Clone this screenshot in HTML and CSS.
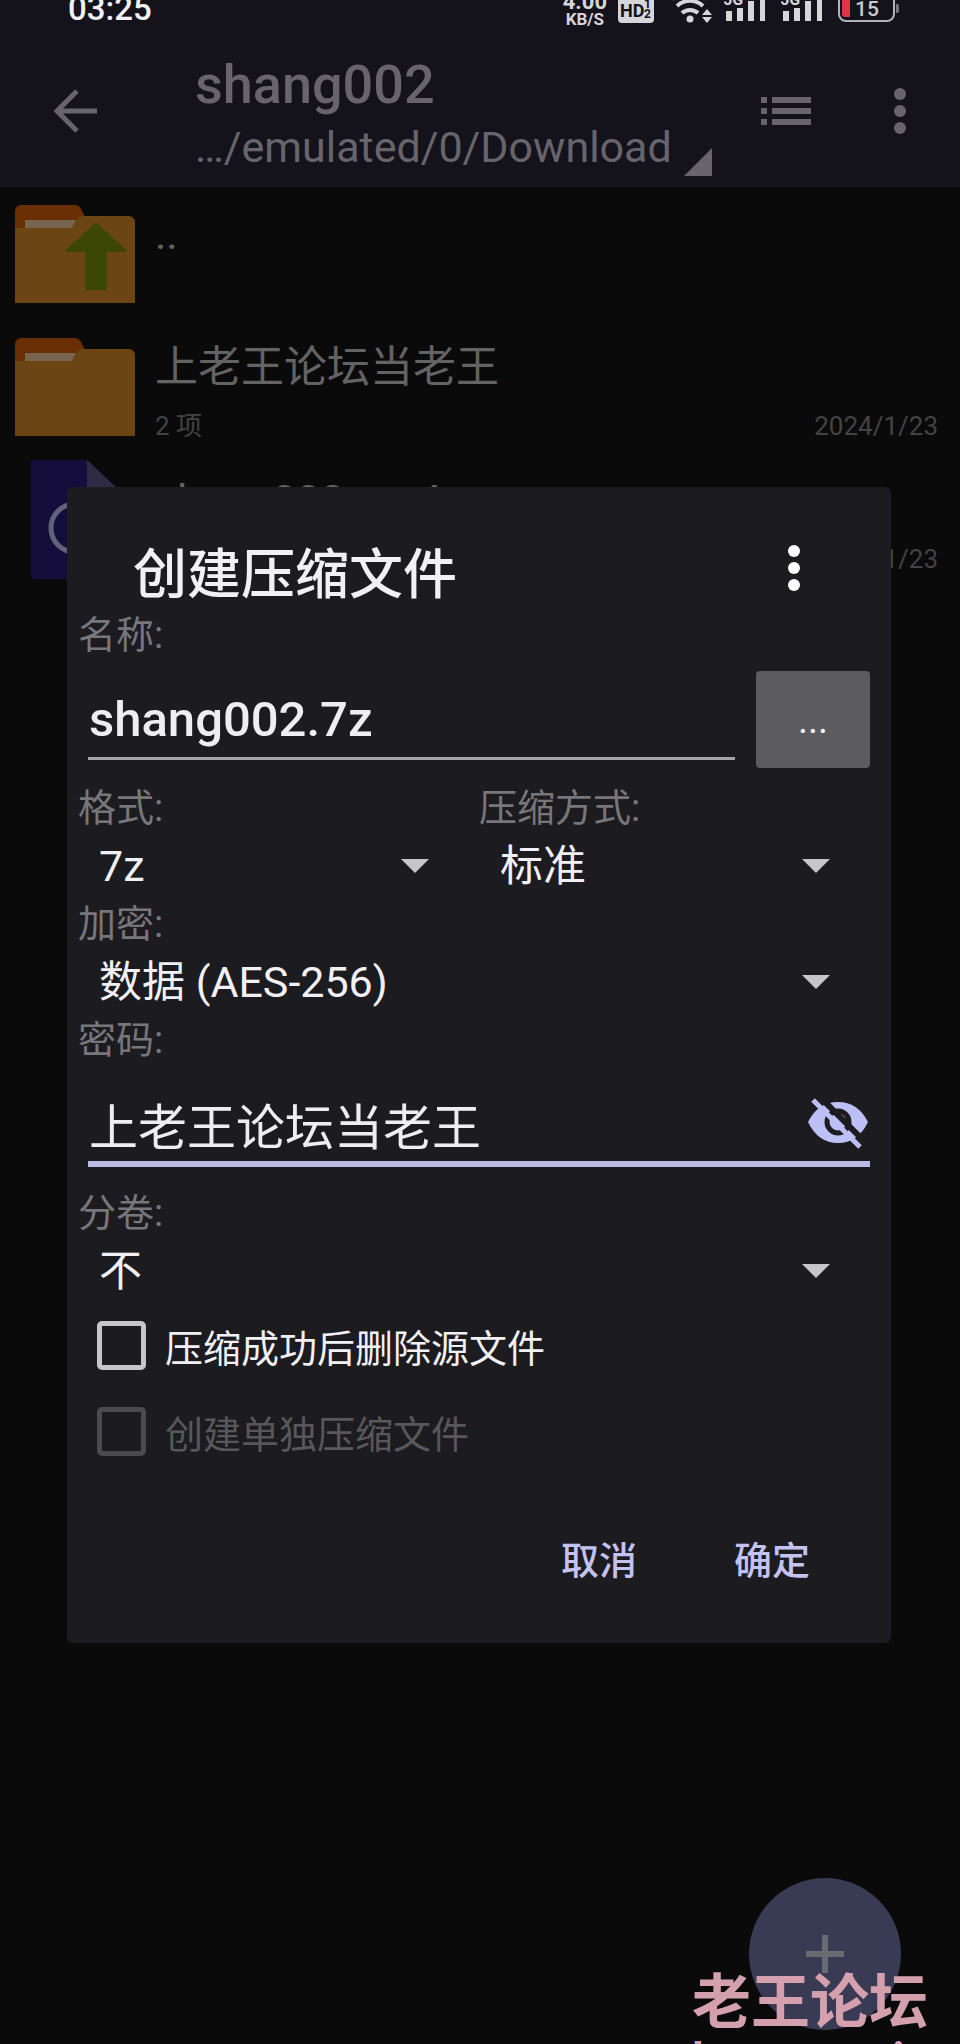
FILE: index.html
```html
<!DOCTYPE html>
<html lang="zh-CN">
<head>
<meta charset="utf-8">
<meta name="viewport" content="width=device-width, initial-scale=1">
<title>创建压缩文件</title>
<link rel="stylesheet" href="styles.css">
</head>
<body>
<div class="screen">
  <header class="app-header">
    <div class="status">
      <span class="clock">03:25</span>
      <div class="status-icons">
        <span class="speed"><span class="speed-value">4.00</span><span>KB/S</span></span>
        <svg class="hd" width="38" height="28" viewBox="0 0 38 28" aria-hidden="true">
          <rect x="1" y="-8" width="36" height="31" rx="4" fill="#d6d5da"/>
          <text x="3" y="17" font-size="18" font-weight="700" fill="#14121b">HD</text>
          <text x="27" y="8" font-size="12" font-weight="700" fill="#14121b">1</text>
          <text x="27" y="18" font-size="12" font-weight="700" fill="#14121b">2</text>
        </svg>
        <svg class="wifi" width="42" height="28" viewBox="0 0 42 28" aria-hidden="true">
          <circle cx="19" cy="19" r="3.5" fill="#d6d5da"/>
          <g fill="none" stroke="#d6d5da" stroke-width="4"><path d="M11 13a12 12 0 0 1 16 0"/><path d="M6 6a19 19 0 0 1 26 0"/><path d="M1-1a27 27 0 0 1 36 0"/></g>
          <path d="M31 15h10l-5-6zM31 17h10l-5 6z" fill="#d6d5da"/>
        </svg>
        <svg class="signal" width="42" height="28" viewBox="0 0 42 28" aria-hidden="true">
          <path d="M2 11h6v10h-6zM13 8h6v13h-6zM24 1h6v20h-6zM36 0h5v21h-5z" fill="#d6d5da"/>
          <text x="-1" y="5" font-size="16" font-weight="700" fill="#d6d5da">5G</text>
        </svg>
        <svg class="signal" width="42" height="28" viewBox="0 0 42 28" aria-hidden="true">
          <path d="M2 11h6v10h-6zM13 8h6v13h-6zM24 1h6v20h-6zM36 0h5v21h-5z" fill="#d6d5da"/>
          <text x="-1" y="5" font-size="16" font-weight="700" fill="#d6d5da">5G</text>
        </svg>
        <svg class="battery" width="62" height="28" viewBox="0 0 62 28" aria-hidden="true">
          <rect x="1" y="-8" width="55" height="29" rx="7" fill="none" stroke="#b3b2b9" stroke-width="2"/>
          <path d="M58 4h1a2 2 0 0 1 2 2v5a2 2 0 0 1-2 2h-1z" fill="#77767c"/>
          <path d="M4-4h8v21h-5a3 3 0 0 1-3-3z" fill="#dc3547"/>
          <text x="17" y="16" font-size="21" font-weight="500" fill="#cccbd1">15</text>
        </svg>
      </div>
    </div>
    <div class="toolbar">
      <button class="icon-btn" type="button" aria-label="返回">
        <svg width="44" height="44" viewBox="0 0 44 44"><path d="M43 22H3M23 2L3 22l20 20" fill="none" stroke="#67656b" stroke-width="5"/></svg>
      </button>
      <div class="heading">
        <h1 class="title">shang002</h1>
        <div class="path"><span>…/emulated/0/Download</span><svg width="28" height="28" viewBox="0 0 28 28" aria-hidden="true"><path d="M28 0v28H0z" fill="#67656b"/></svg></div>
      </div>
      <button class="icon-btn" type="button" aria-label="列表视图">
        <svg width="50" height="28" viewBox="0 0 50 28"><path d="M0 0h6v6H0zM11 0h39v6H11zM0 11h6v6H0zM11 11h39v6H11zM0 22h6v6H0zM11 22h39v6H11z" fill="#67656b"/></svg>
      </button>
      <button class="icon-btn more" type="button" aria-label="更多">
        <svg width="12" height="46" viewBox="0 0 12 46"><g fill="#67656b"><circle cx="6" cy="6" r="6"/><circle cx="6" cy="23" r="6"/><circle cx="6" cy="40" r="6"/></g></svg>
      </button>
    </div>
  </header>

  <ul class="files">
    <li class="file">
      <svg class="file-icon" width="121" height="98" viewBox="0 0 121 98" aria-hidden="true">
        <path d="M0 30V6a6 6 0 0 1 6-6h54q4 0 6 4l7 14v12z" fill="#6a2e05"/>
        <path d="M0 23h57l5-9q2-3 6-3h46a6 6 0 0 1 6 6v81H0z" fill="#6b4513"/>
        <path d="M10 15h51l-4 8H10z" fill="#78654f"/>
        <path d="M81 17l32 30H92v38H70V47H49z" fill="#3c4703"/>
      </svg>
      <div class="file-text"><span class="file-name">..</span></div>
    </li>
    <li class="file">
      <svg class="file-icon" width="121" height="98" viewBox="0 0 121 98" aria-hidden="true">
        <path d="M0 30V6a6 6 0 0 1 6-6h54q4 0 6 4l7 14v12z" fill="#6a2e05"/>
        <path d="M0 23h57l5-9q2-3 6-3h46a6 6 0 0 1 6 6v81H0z" fill="#6b4513"/>
        <path d="M10 15h51l-4 8H10z" fill="#78654f"/>
      </svg>
      <div class="file-text">
        <span class="file-name">上老王论坛当老王</span>
        <span class="file-meta"><span>2 项</span><span>2024/1/23</span></span>
      </div>
    </li>
    <li class="file">
      <svg class="file-icon" width="121" height="120" viewBox="0 0 121 120" aria-hidden="true">
        <path d="M20 0h52l34 32v82a5 5 0 0 1-5 5H20a4 4 0 0 1-4-4V4a4 4 0 0 1 4-4z" fill="#150e3c"/>
        <path d="M72 0l34 32H72z" fill="#2f2b44"/>
        <circle cx="60" cy="68" r="24" fill="none" stroke="#64627a" stroke-width="5"/>
      </svg>
      <div class="file-text">
        <span class="file-name">shang002.mp4</span>
        <span class="file-meta"><span></span><span>2024/1/23</span></span>
      </div>
    </li>
  </ul>

  <button class="fab" type="button" aria-label="新建">
    <svg width="38" height="38" viewBox="0 0 38 38"><path d="M16 0h6v16h16v6H22v16h-6V22H0v-6h16z" fill="#686c71"/></svg>
  </button>

  <div class="overlay">
    <form class="dialog" role="dialog" aria-labelledby="dialog-title">
      <div class="dialog-head">
        <h2 class="dialog-title" id="dialog-title">创建压缩文件</h2>
        <button class="icon-btn" type="button" aria-label="更多选项">
          <svg width="12" height="46" viewBox="0 0 12 46"><g fill="#fff"><circle cx="6" cy="6" r="6"/><circle cx="6" cy="23" r="6"/><circle cx="6" cy="40" r="6"/></g></svg>
        </button>
      </div>

      <label class="label" for="name">名称:</label>
      <div class="name-row">
        <input class="input name" id="name" type="text" value="shang002.7z">
        <button class="browse" type="button" aria-label="浏览">...</button>
      </div>

      <div class="columns">
        <div>
          <label class="label" for="format">格式:</label>
          <div class="spinner"><select id="format"><option>7z</option></select></div>
        </div>
        <div>
          <label class="label" for="method">压缩方式:</label>
          <div class="spinner"><select id="method"><option>标准</option></select></div>
        </div>
      </div>

      <label class="label" for="encryption">加密:</label>
      <div class="spinner"><select id="encryption"><option>数据 (AES-256)</option></select></div>

      <label class="label" for="password">密码:</label>
      <div class="password-row">
        <input class="input" id="password" type="text" value="上老王论坛当老王">
        <button class="icon-btn eye" type="button" aria-label="隐藏密码">
          <svg width="60" height="52" viewBox="0 0 60 52">
            <path d="M0 24Q10 4 30 4t30 20Q50 45 30 45T0 24z" fill="#bdc0f6"/>
            <circle cx="30" cy="24" r="11" fill="none" stroke="#1c1b1f" stroke-width="5"/>
            <path d="M10-3l46 46" stroke="#1c1b1f" stroke-width="6"/>
            <path d="M5 2l47 47" stroke="#bdc0f6" stroke-width="5"/>
          </svg>
        </button>
      </div>

      <label class="label" for="volume">分卷:</label>
      <div class="spinner"><select id="volume"><option>不</option></select></div>

      <div class="checks">
        <label class="check"><input type="checkbox"><span>压缩成功后删除源文件</span></label>
        <label class="check"><input type="checkbox" disabled><span>创建单独压缩文件</span></label>
      </div>

      <div class="actions">
        <button class="action" type="button">取消</button>
        <button class="action" type="button">确定</button>
      </div>
    </form>
  </div>

  <div class="watermark"><span>老王论坛</span><span class="watermark-site">laowang.vip</span></div>
</div>
</body>
</html>
```
FILE: styles.css
```css
* { box-sizing: border-box; }

body {
  margin: 0;
  background: #0a0a0b;
  font-family: Roboto, "Noto Sans CJK SC", sans-serif;
}

h1, h2, ul { margin: 0; padding: 0; }

button, input, select { font-family: inherit; }

.screen {
  position: relative;
  min-height: 100vh;
  overflow: hidden;
}

.icon-btn {
  display: flex;
  padding: 0;
  border: 0;
  background: none;
}

/* Status bar and toolbar */
.app-header { background: #14121b; }

.status {
  display: flex;
  justify-content: space-between;
  align-items: flex-end;
  height: 28px;
  padding: 0 60px 0 68px;
  overflow: hidden;
  color: #f2f1f6;
}

.clock {
  padding-bottom: 3px;
  font-size: 33px;
  font-weight: 500;
  line-height: 32px;
}

.status-icons {
  display: flex;
  align-items: flex-end;
}

.speed {
  display: flex;
  flex-direction: column;
  align-items: center;
  margin-right: 10px;
  color: #d6d5da;
  font-size: 17px;
  font-weight: 700;
  line-height: 17px;
}

.speed-value {
  font-size: 22px;
  line-height: 19px;
}

.hd { margin-right: 16px; }
.wifi { margin-right: 11px; }
.signal { margin-right: 15px; }

.toolbar {
  display: flex;
  align-items: center;
  height: 159px;
  padding: 6px 54px 0 54px;
}

.heading {
  flex: 1;
  margin-left: 97px;
  padding-top: 4px;
  color: #67656b;
}

.title {
  padding-top: 2px;
  font-size: 54px;
  font-weight: 500;
  line-height: 66px;
}

.path {
  display: flex;
  align-items: flex-end;
  gap: 12px;
  font-size: 43px;
  line-height: 58px;
}

.more { margin-left: 83px; }

/* File list */
.files { list-style: none; }

.file {
  display: flex;
  align-items: center;
  gap: 19px;
  height: 133px;
  padding: 0 22px 0 15px;
}

.file-icon { flex: none; }

.file-text {
  flex: 1;
  align-self: stretch;
  display: flex;
  flex-direction: column;
  padding-top: 11px;
}

.file-name {
  color: #636364;
  font-size: 43px;
  line-height: 72px;
}

.file-meta {
  display: flex;
  justify-content: space-between;
  color: #434344;
  font-size: 26px;
  line-height: 46px;
}

.fab {
  position: absolute;
  right: 59px;
  bottom: 14px;
  display: flex;
  align-items: center;
  justify-content: center;
  width: 152px;
  height: 152px;
  border: 0;
  border-radius: 50%;
  background: #393a54;
}

/* Dialog */
.overlay {
  position: absolute;
  inset: 0;
  padding: 487px 69px 0 67px;
}

.dialog {
  padding: 0 11px 46px;
  border-radius: 6px;
  background: #1c1b1f;
}

.dialog-head {
  display: flex;
  justify-content: space-between;
  align-items: center;
  height: 126px;
  padding: 36px 80px 0 55px;
}

.dialog-title {
  padding-top: 16px;
  color: #f1f0f5;
  font-size: 54px;
  font-weight: 500;
  line-height: 74px;
}

.label {
  display: block;
  color: #77767b;
  font-size: 38px;
  line-height: 44px;
}

.input {
  flex: 1;
  min-width: 0;
  height: 89px;
  padding: 10px 0 0 1px;
  border: 0;
  border-bottom: 3px solid #a5a4a9;
  border-radius: 0;
  outline: 0;
  background: none;
  color: #eeedf2;
  font-size: 49px;
}

.name { font-weight: 500; }

.name-row {
  display: flex;
  gap: 21px;
  padding: 14px 10px 18px 10px;
}

.browse {
  width: 114px;
  height: 97px;
  border: 0;
  border-radius: 4px;
  background: #5c5b60;
  color: #f1f0f5;
  font-size: 38px;
}

.columns {
  display: grid;
  grid-template-columns: 1fr 1fr;
}

.spinner {
  display: grid;
  align-items: center;
}

.spinner select,
.spinner::after { grid-area: 1 / 1; }

.spinner select {
  appearance: none;
  width: 100%;
  height: 72px;
  padding: 0 80px 0 21px;
  border: 0;
  background: none;
  color: #f1f0f5;
  font-size: 43px;
}

.spinner::after {
  content: "";
  justify-self: end;
  width: 28px;
  height: 14px;
  margin-right: 50px;
  background: #c6c5ca;
  clip-path: polygon(0 0, 100% 0, 50% 100%);
  pointer-events: none;
}

.password-row {
  position: relative;
  display: flex;
  padding: 16px 10px 24px 10px;
}

.password-row .input {
  padding: 8px 80px 0 1px;
  border-bottom: 6px solid #bdbbe6;
}

.eye {
  position: absolute;
  top: 36px;
  right: 12px;
}

.checks {
  display: grid;
  gap: 9px;
}

.check {
  display: flex;
  align-items: center;
  gap: 19px;
  height: 77px;
  padding-left: 19px;
  color: #f1f0f5;
  font-size: 38px;
}

.check input {
  appearance: none;
  width: 49px;
  height: 49px;
  margin: 0;
  border: 5px solid #c6c5ca;
  border-radius: 5px;
}

.check input:disabled { border-color: #4b4a4e; }
.check input:disabled + span { color: #58575c; }

.actions {
  display: flex;
  justify-content: flex-end;
  gap: 47px;
  padding: 47px 45px 0 0;
}

.action {
  height: 80px;
  padding: 0 25px;
  border: 0;
  background: none;
  color: #c3c2f0;
  font-size: 38px;
  font-weight: 500;
}

/* Site mark in the corner */
.watermark {
  position: absolute;
  right: 31px;
  bottom: 0;
  display: flex;
  flex-direction: column;
  height: 76px;
  overflow: hidden;
  color: #d4a0ae;
  font-size: 59px;
  font-weight: 700;
  line-height: 70px;
  pointer-events: none;
}

.watermark-site {
  font-size: 44px;
  line-height: 42px;
}
```
